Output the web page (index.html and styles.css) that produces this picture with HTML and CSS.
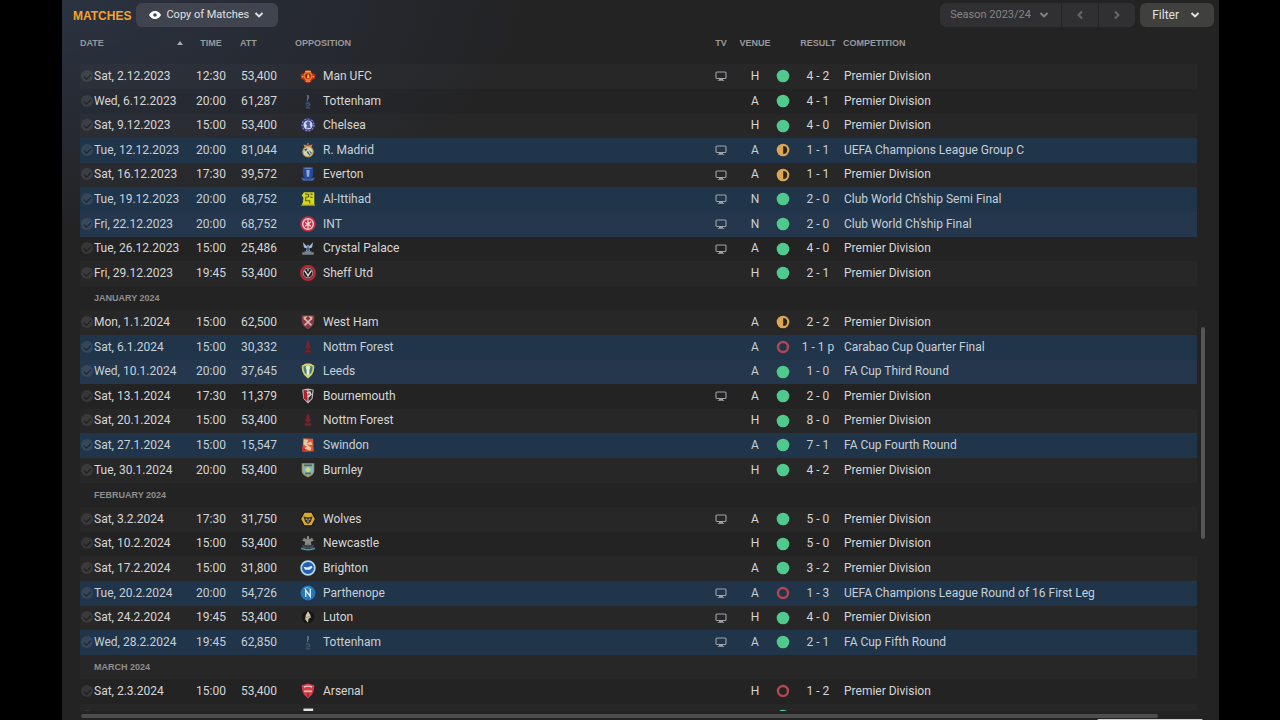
FILE: index.html
```html
<!DOCTYPE html>
<html lang="en">
<head>
<meta charset="utf-8">
<title>Matches</title>
<link rel="stylesheet" href="styles.css">
</head>
<body>
<svg class="sprite" aria-hidden="true">
  <symbol id="tv" viewBox="0 0 12 10"><rect x="1" y="1" width="10" height="6.5" rx="1" fill="none" stroke="currentColor" stroke-width="1.1"/><path d="M4 7.5h4v1.400h1.200v.9H2.800v-.9H4z" fill="currentColor"/></symbol>
  <symbol id="down" viewBox="0 0 10 8"><path d="M1.500 2l3.500 3.400L8.500 2" fill="none" stroke="currentColor" stroke-width="2"/></symbol>
  <symbol id="eye" viewBox="0 0 12 10"><path fill-rule="evenodd" fill="currentColor" d="M6 1C9 1 11 3 12 5 11 7 9 9 6 9S1 7 0 5C1 3 3 1 6 1zm0 2.200a1.800 1.800 0 1 0 0 3.600 1.800 1.800 0 0 0 0-3.600z"/></symbol>
  <symbol id="win" viewBox="0 0 14 14"><circle cx="7" cy="7" r="6.300" fill="#50ca8c"/></symbol>
  <symbol id="draw" viewBox="0 0 14 14"><circle cx="7" cy="7" r="6.300" fill="#dba751"/><path d="M7.200 3a4 4 0 0 1 0 8z" fill="#2b2624"/></symbol>
  <symbol id="loss" viewBox="0 0 14 14"><circle cx="7" cy="7" r="5" fill="none" stroke="#b34650" stroke-width="2.400"/></symbol>

  <symbol id="manufc" viewBox="0 0 28 28"><path d="M1 12l3-3 3 1c2-8 12-8 14 0l3-1 3 3-1 7-5 2c-3 7-11 7-14 0l-5-2z" fill="#c32d20"/><circle cx="14" cy="14" r="8" fill="#df7b21"/><circle cx="14" cy="14" r="5" fill="#a72016"/><path d="M12 18l2-9 2 4 1 5z" fill="#f5b53c"/><path d="M3 15h3m16 0h3M9 6h10M10 23h8" stroke="#edaa35" stroke-width="2"/></symbol>
  <symbol id="tottenham" viewBox="0 0 28 28"><path d="M12 3l3 1 1 4-2 4-1 4-1-5 1-3z" fill="#65758b"/><circle cx="14" cy="20" r="5" fill="#283950"/><path d="M11 18l4-1 2 4-4 2M10 26h8" fill="none" stroke="#53657d" stroke-width="1.500"/></symbol>
  <symbol id="chelsea" viewBox="0 0 28 28"><circle cx="14" cy="14" r="12" fill="#353985"/><circle cx="14" cy="14" r="10.500" fill="none" stroke="#8c8fc4" stroke-width="2" stroke-dasharray="3 3"/><circle cx="14" cy="14" r="8" fill="#d4d9ea"/><path d="M11 20l1-5-2-4 4-4 4 2-1 4 2 6z" fill="#4d62ab"/></symbol>
  <symbol id="madrid" viewBox="0 0 28 28"><path d="M8 9l-2-5 5 2 3-5 3 5 5-2-2 5z" fill="#c9903e"/><path d="M14 3v5" stroke="#b63c42" stroke-width="3"/><circle cx="14" cy="17" r="9" fill="#d9d4b8" stroke="#bda14d" stroke-width="2"/><path d="M7 13l5-2 9 8-4 5z" fill="#365f87"/><path d="M10 19l4-6 4 8" fill="none" stroke="#e7dc91" stroke-width="2"/></symbol>
  <symbol id="everton" viewBox="0 0 28 28"><path d="M5 2h18v12c0 5-4 8-9 10-5-2-9-5-9-10z" fill="#2849a0"/><path d="M11 7h6l-1 12h-4z" fill="#8daad6"/><path d="M2 20l5 1 7 2 7-2 5-1-3 6H5z" fill="#4563a4"/><path d="M8 4h12" stroke="#6e8bc5" stroke-width="2"/></symbol>
  <symbol id="ittihad" viewBox="0 0 28 28"><path d="M7 2h18v20l1 4H2l3-6 1-8-3-4z" fill="#d9d71c"/><path d="M9 5l6 1v4l-5 1v6h7v5M18 5l4 1M18 10l4 2" fill="none" stroke="#5d6212" stroke-width="2"/><path d="M3 25h22" stroke="#88881c" stroke-width="2"/></symbol>
  <symbol id="inter" viewBox="0 0 28 28"><circle cx="14" cy="14" r="12" fill="#e6cbd2" stroke="#c52d43" stroke-width="3"/><circle cx="14" cy="14" r="8" fill="#ce2e45"/><path d="M9 18l10-8M14 6v16M9 11l10 7" stroke="#f5e0e3" stroke-width="2"/></symbol>
  <symbol id="palace" viewBox="0 0 28 28"><path d="M5 4l7 7 2-3 2 3 7-7-2 9-5 2 2 5h-8l2-5-5-2z" fill="#a7bad2"/><path d="M14 10l3 7-3 5-3-5z" fill="#315e9c"/><path d="M4 21l4 1v-3l3 2 3-3 3 3 3-2v3l4-1v5H4z" fill="#7c828b"/></symbol>
  <symbol id="sheff" viewBox="0 0 28 28"><circle cx="14" cy="14" r="12" fill="#211e20" stroke="#b92936" stroke-width="4"/><circle cx="14" cy="14" r="8.500" fill="none" stroke="#c6b9bc" stroke-width="1.500"/><path d="M8 10l7 10M20 10l-7 10" stroke="#ddd" stroke-width="2.500"/><path d="M12 8h4l-2 4z" fill="#ddd"/></symbol>
  <symbol id="westham" viewBox="0 0 28 28"><path d="M3 2h22v10c0 8-6 12-11 15C9 24 3 20 3 12z" fill="#813b4a"/><path d="M7 7l13 13M21 7L8 20" stroke="#dfb0a4" stroke-width="3"/><path d="M6 6l5-1-4 5m15-4l-5-1 4 5" stroke="#e4b68c" stroke-width="2" fill="none"/></symbol>
  <symbol id="forest" viewBox="0 0 28 28"><path d="M14 2l4 7-2 1 4 5-4 1 2 3h-8l2-3-4-1 4-5-2-1z" fill="#72242c"/><path d="M8 19h12v6H8z" fill="#5d222c"/><path d="M10 22h8" stroke="#82333b"/></symbol>
  <symbol id="leeds" viewBox="0 0 28 28"><path d="M3 5l7-4h8l7 4c0 12-4 17-11 22C7 22 3 17 3 5z" fill="#d8d66a"/><path d="M6 6l8-2 8 2c0 9-3 13-8 17C9 19 6 15 6 6z" fill="#477d80"/><path d="M14 6v16" stroke="#e9edcf" stroke-width="5"/><circle cx="14" cy="8" r="4" fill="#e4e6ca"/></symbol>
  <symbol id="bournemouth" viewBox="0 0 28 28"><path d="M4 3l10-2 10 2-2 16-8 8-8-8z" fill="#c9bec1"/><path d="M6 4h7v20l-6-6z" fill="#ae1f2b"/><path d="M15 4h7l-2 14-5 5z" fill="#202024"/><path d="M12 9l5-2 2 4-5 5" stroke="#ded5d4" stroke-width="3" fill="none"/></symbol>
  <symbol id="swindon" viewBox="0 0 28 28"><path d="M5 2l18 1 1 22-19 1z" fill="#d95a39"/><path d="M7 4l8 1-3 6 7-3 3 6-10-1 8 6-2 5-10-4 4-3-6-4z" fill="#e8c8a2"/><path d="M3 15l10 11H4z" fill="#c9302f"/></symbol>
  <symbol id="burnley" viewBox="0 0 28 28"><path d="M3 2h22v13c0 6-5 10-11 12C8 25 3 21 3 15z" fill="#9a9a66"/><path d="M5 4h18v11c0 5-4 7-9 9-5-2-9-4-9-9z" fill="#7bb6c3"/><path d="M9 13l5-5 5 5-5 7z" fill="#d2d47b"/><path d="M7 6h14M9 20h10" stroke="#6e6337" stroke-width="3"/></symbol>
  <symbol id="wolves" viewBox="0 0 28 28"><path d="M7 1h14l7 13-7 13H7L0 14z" fill="#171717"/><path d="M8 3h12l6 11-6 11H8L2 14z" fill="#dba82e"/><path d="M6 9l5 2h6l5-2-3 10-5 4-5-4z" fill="#37372b"/><path d="M10 14l3 1m5-1l-3 1m-1 1v4" stroke="#b6b59d" stroke-width="2"/></symbol>
  <symbol id="newcastle" viewBox="0 0 28 28"><path d="M12 2h4v6l5-3 3 5-5 2 1 6H8l1-6-5-2 3-5 5 3z" fill="#898986"/><path d="M3 17l9 3 2-5 2 5 9-3-2 6H5z" fill="#454b4e"/><path d="M2 22q12 5 24 0v3q-12 4-24 0z" fill="#48a3ba"/></symbol>
  <symbol id="brighton" viewBox="0 0 28 28"><circle cx="14" cy="14" r="12" fill="#2361ad" stroke="#b9d6ee" stroke-width="3"/><path d="M6 12l7 1 7-3 2 3-5 4-8 0z" fill="#e2edf6"/></symbol>
  <symbol id="parthenope" viewBox="0 0 28 28"><circle cx="14" cy="14" r="13" fill="#2476b7"/><path d="M7 7q7-5 13 1" fill="none" stroke="#6caedb" stroke-width="2"/><path d="M10 21V9l8 11V7" stroke="#d5edf8" stroke-width="2.500" fill="none"/></symbol>
  <symbol id="luton" viewBox="0 0 28 28"><circle cx="14" cy="14" r="11" fill="#171716"/><path d="M14 4l4 6 1 5-4 2-1 7-5-6 1-7z" fill="#d2c7a6"/><path d="M10 15l8-2" stroke="#82745d"/></symbol>
  <symbol id="arsenal" viewBox="0 0 28 28"><path d="M3 4l11-3 11 3c0 12-3 17-11 23C6 21 3 16 3 4z" fill="#d13d4c"/><path d="M7 7q7-3 14 0" fill="none" stroke="#f0c3c4" stroke-width="2.500"/><path d="M7 13h14v3H7z" fill="#e4bd99"/><path d="M14 17v7" stroke="#861d36" stroke-width="2"/></symbol>
  <symbol id="magpie" viewBox="0 0 28 28"><path d="M6 1h17v25H6z" fill="#e4e4e2"/><path d="M10 8h8v5h-8z" fill="#333"/></symbol>
</svg>

<main class="app">
  <header class="toolbar">
    <h1 class="title">MATCHES</h1>
    <div class="picker">
      <svg class="eye"><use href="#eye"/></svg>
      <select class="picker-select" aria-label="View"><option>Copy of Matches</option></select>
      <svg class="chevron"><use href="#down"/></svg>
    </div>
    <div class="season">
      <div class="season-picker">
        <select class="picker-select" aria-label="Season" disabled><option>Season 2023/24</option></select>
        <svg class="chevron"><use href="#down"/></svg>
      </div>
      <button class="step" type="button" aria-label="Previous season" disabled><svg class="chevron prev"><use href="#down"/></svg></button>
      <button class="step" type="button" aria-label="Next season" disabled><svg class="chevron next"><use href="#down"/></svg></button>
    </div>
    <button class="filter" type="button">Filter <svg class="chevron"><use href="#down"/></svg></button>
  </header>

  <div class="content">
    <div class="viewport">
      <table class="matches">
        <colgroup>
          <col class="col-date"><col class="col-time"><col class="col-att"><col class="col-opp"><col class="col-tv">
          <col class="col-venue"><col class="col-mark"><col class="col-result"><col class="col-comp">
        </colgroup>
        <thead>
          <tr>
            <th scope="col"><span class="sorted">DATE <span class="arrow"></span></span></th>
            <th scope="col" class="mid">TIME</th>
            <th scope="col" class="att">ATT</th>
            <th scope="col">OPPOSITION</th>
            <th scope="col" class="mid">TV</th>
            <th scope="col" class="mid">VENUE</th>
            <th></th>
            <th scope="col" class="mid">RESULT</th>
            <th scope="col">COMPETITION</th>
          </tr>
        </thead>
        <tbody id="rows"></tbody>
      </table>
    </div>
    <div class="vscroll"><div class="vthumb"></div></div>
  </div>
  <footer class="bottom">
    <div class="hthumb"></div>
    <div class="edge"></div>
  </footer>
</main>
<script src="app.js"></script>
</body>
</html>
```
FILE: styles.css
```css
* { box-sizing: border-box; }

body {
  margin: 0;
  background: #000;
  color: #d6d6d6;
  font: 12px/16px Roboto, "Liberation Sans", sans-serif;
}

.sprite { display: none; }

.app {
  display: flex;
  flex-direction: column;
  height: 100vh;
  margin: 0 61px 0 62px;
  overflow: hidden;
  background:
    radial-gradient(ellipse 460px 230px at 0 0, #2b3341 0%, #272b34 45%, transparent 100%),
    #232324;
}

/* Toolbar */
.toolbar {
  display: flex;
  align-items: center;
  height: 28px;
  padding: 3px 5px 1px 11px;
}

.title {
  margin: 2px 5px 0 0;
  color: #f5a12d;
  font: bold 12px/16px "Liberation Sans", sans-serif;
}

.picker, .season, .filter {
  display: flex;
  align-items: center;
  height: 24px;
  border-radius: 6px;
}

.picker {
  gap: 5px;
  padding: 0 14px 0 13px;
  background: #40444e;
  color: #e0e0e2;
  font-size: 11px;
}

.picker-select {
  appearance: none;
  padding: 0;
  border: 0;
  background: none;
  color: inherit;
  font: inherit;
  opacity: 1;
}

.eye { width: 12px; height: 10px; color: #fff; }
.chevron { width: 10px; height: 8px; }

.season {
  margin-left: auto;
  background: #303032;
  color: #858586;
  font-size: 11px;
}

.season-picker {
  display: flex;
  align-items: center;
  gap: 8px;
  padding: 0 12px 0 10px;
}

.step {
  display: grid;
  place-items: center;
  width: 37px;
  height: 24px;
  padding: 0;
  border: 0;
  border-left: 1px solid #252527;
  background: none;
  color: #666668;
}

.prev { transform: rotate(90deg); }
.next { transform: rotate(-90deg); }

.filter {
  gap: 11px;
  margin-left: 5px;
  padding: 0 14px 0 12px;
  border: 0;
  background: #40403f;
  color: #e2e2e0;
  font: inherit;
}

/* Table */
.content {
  display: flex;
  flex: 1;
  min-height: 0;
  padding: 0 14px 0 18px;
}

.viewport { flex: 1; min-width: 0; overflow: hidden; }

.matches {
  width: 100%;
  table-layout: fixed;
  border-collapse: collapse;
}

.col-date { width: 108px; }
.col-time { width: 46px; }
.col-att { width: 61px; }
.col-tv { width: 32px; }
.col-venue { width: 36px; }
.col-mark { width: 20px; }
.col-result { width: 50px; }
.col-comp { width: 354px; }

.matches th {
  height: 36px;
  padding: 0 0 6px;
  color: #98999c;
  font: bold 9px/12px "Liberation Sans", sans-serif;
  text-align: left;
  white-space: nowrap;
}

.matches th.att { padding-left: 6px; }
.matches th.mid, .matches td.mid { text-align: center; }

.sorted {
  display: flex;
  align-items: center;
  justify-content: space-between;
  padding-right: 5px;
}

.arrow {
  border: 3px solid transparent;
  border-top: 0;
  border-bottom: 4px solid #a9aaad;
}

.matches td { height: 25px; padding: 0 0 2px; white-space: nowrap; }
.matches tbody tr:nth-child(5n) td,
.matches tbody tr:nth-child(5n + 3) td { height: 24px; }
.matches tbody tr:nth-child(odd) { background: rgba(255, 255, 255, 0.02); }
.matches tbody tr.cup { background: #20344a; color: #c6d0d8; }
.matches tbody tr.cup:nth-child(odd) { background: #24374c; }

.matches td.month {
  padding: 0 0 0 14px;
  color: #8e8e8e;
  font: bold 9px/12px "Liberation Sans", sans-serif;
}

.matches td.att { padding-left: 7px; }
.matches td.comp { padding-left: 1px; }

.date, .club { display: flex; align-items: center; }

.tick {
  appearance: none;
  display: grid;
  place-items: center;
  flex: none;
  width: 12px;
  height: 12px;
  margin: 0 1px;
  border-radius: 50%;
  background: rgba(255, 255, 255, 0.09);
}

.tick::after {
  content: "";
  width: 6px;
  height: 3px;
  border: solid rgba(10, 10, 10, 0.6);
  border-width: 0 0 1px 1px;
  transform: rotate(-45deg);
}

.club { gap: 7px; padding-left: 5px; }
.crest { width: 16px; height: 16px; }
.mark { display: block; width: 14px; height: 14px; margin: 1px auto 0; }
.tv { display: block; width: 12px; height: 10px; margin: 1px auto 0; color: #a0a4a8; }

/* Scrollbars */
.vscroll { width: 4px; margin-left: 4px; }
.vthumb { height: 31%; margin-top: 299px; border-radius: 2px; background: #555556; }

.bottom { height: 9px; padding: 3px 16px 0 19px; }
.hthumb { width: 96%; height: 4px; border-radius: 2px; background: #4d4d4d; }
.edge { width: 106px; height: 2px; margin: 1px 0 0 auto; border-radius: 2px 2px 0 0; background: #d4d0d0; }
```
FILE: app.js
```js
const matches = [
  ["Sat, 2.12.2023", "12:30", "53,400", "manufc", "Man UFC", 1, "H", "win", "4 - 2", "Premier Division"],
  ["Wed, 6.12.2023", "20:00", "61,287", "tottenham", "Tottenham", 0, "A", "win", "4 - 1", "Premier Division"],
  ["Sat, 9.12.2023", "15:00", "53,400", "chelsea", "Chelsea", 0, "H", "win", "4 - 0", "Premier Division"],
  ["Tue, 12.12.2023", "20:00", "81,044", "madrid", "R. Madrid", 1, "A", "draw", "1 - 1", "UEFA Champions League Group C"],
  ["Sat, 16.12.2023", "17:30", "39,572", "everton", "Everton", 1, "A", "draw", "1 - 1", "Premier Division"],
  ["Tue, 19.12.2023", "20:00", "68,752", "ittihad", "Al-Ittihad", 1, "N", "win", "2 - 0", "Club World Ch'ship Semi Final"],
  ["Fri, 22.12.2023", "20:00", "68,752", "inter", "INT", 1, "N", "win", "2 - 0", "Club World Ch'ship Final"],
  ["Tue, 26.12.2023", "15:00", "25,486", "palace", "Crystal Palace", 1, "A", "win", "4 - 0", "Premier Division"],
  ["Fri, 29.12.2023", "19:45", "53,400", "sheff", "Sheff Utd", 0, "H", "win", "2 - 1", "Premier Division"],
  "JANUARY 2024",
  ["Mon, 1.1.2024", "15:00", "62,500", "westham", "West Ham", 0, "A", "draw", "2 - 2", "Premier Division"],
  ["Sat, 6.1.2024", "15:00", "30,332", "forest", "Nottm Forest", 0, "A", "loss", "1 - 1 p", "Carabao Cup Quarter Final"],
  ["Wed, 10.1.2024", "20:00", "37,645", "leeds", "Leeds", 0, "A", "win", "1 - 0", "FA Cup Third Round"],
  ["Sat, 13.1.2024", "17:30", "11,379", "bournemouth", "Bournemouth", 1, "A", "win", "2 - 0", "Premier Division"],
  ["Sat, 20.1.2024", "15:00", "53,400", "forest", "Nottm Forest", 0, "H", "win", "8 - 0", "Premier Division"],
  ["Sat, 27.1.2024", "15:00", "15,547", "swindon", "Swindon", 0, "A", "win", "7 - 1", "FA Cup Fourth Round"],
  ["Tue, 30.1.2024", "20:00", "53,400", "burnley", "Burnley", 0, "H", "win", "4 - 2", "Premier Division"],
  "FEBRUARY 2024",
  ["Sat, 3.2.2024", "17:30", "31,750", "wolves", "Wolves", 1, "A", "win", "5 - 0", "Premier Division"],
  ["Sat, 10.2.2024", "15:00", "53,400", "newcastle", "Newcastle", 0, "H", "win", "5 - 0", "Premier Division"],
  ["Sat, 17.2.2024", "15:00", "31,800", "brighton", "Brighton", 0, "A", "win", "3 - 2", "Premier Division"],
  ["Tue, 20.2.2024", "20:00", "54,726", "parthenope", "Parthenope", 1, "A", "loss", "1 - 3", "UEFA Champions League Round of 16 First Leg"],
  ["Sat, 24.2.2024", "19:45", "53,400", "luton", "Luton", 1, "H", "win", "4 - 0", "Premier Division"],
  ["Wed, 28.2.2024", "19:45", "62,850", "tottenham", "Tottenham", 1, "A", "win", "2 - 1", "FA Cup Fifth Round"],
  "MARCH 2024",
  ["Sat, 2.3.2024", "15:00", "53,400", "arsenal", "Arsenal", 0, "H", "loss", "1 - 2", "Premier Division"],
  ["", "", "", "magpie", "", 0, "", "win", "", ""]
];

const icon = (name, cls) => `<svg class="${cls}"><use href="#${name}"/></svg>`;

document.getElementById("rows").innerHTML = matches.map(row => {
  if (typeof row === "string") return `<tr><td class="month" colspan="9">${row}</td></tr>`;
  const [date, time, att, crest, club, tv, venue, mark, result, comp] = row;
  const league = comp === "" || comp === "Premier Division";
  return `<tr class="${league ? "league" : "cup"}">
    <td><label class="date"><input class="tick" type="checkbox">${date}</label></td>
    <td class="mid">${time}</td>
    <td class="att">${att}</td>
    <td><div class="club">${icon(crest, "crest")}<span>${club}</span></div></td>
    <td>${tv ? icon("tv", "tv") : ""}</td>
    <td class="mid">${venue}</td>
    <td>${icon(mark, "mark")}</td>
    <td class="mid">${result}</td>
    <td class="comp">${comp}</td>
  </tr>`;
}).join("");
```
